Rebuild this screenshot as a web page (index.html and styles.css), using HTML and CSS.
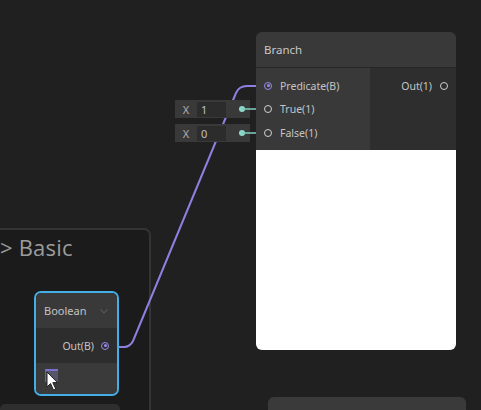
FILE: index.html
```html
<!DOCTYPE html>
<html>
<head>
<meta charset="utf-8">
<link rel="stylesheet" href="styles.css">
</head>
<body>
<div class="canvas">
  <div class="group">
    <div class="group-title">&gt; Basic</div>
  </div>
  <div class="stub-left"></div>
  <div class="stub-right"></div>

  <svg class="edges" width="481" height="410" viewBox="0 0 481 410">
    <path d="M109 347 L124 347 Q130 347 133 341 L236 93 Q239 86 247 86 L264 86" fill="none" stroke="#8f7fe0" stroke-width="2"/>
  </svg>

  <div class="const c1"><span class="cx">X</span><span class="cval">1</span><span class="cdot"></span></div>
  <div class="const c2"><span class="cx">X</span><span class="cval">0</span><span class="cdot"></span></div>
  <svg class="wires" width="481" height="410" viewBox="0 0 481 410">
    <line x1="241" y1="109" x2="264" y2="109" stroke="#7fcfc2" stroke-width="1.5"/>
    <line x1="241" y1="133" x2="264" y2="133" stroke="#7fcfc2" stroke-width="1.5"/>
  </svg>

  <div class="node branch">
    <div class="node-title">Branch</div>
    <div class="ports">
      <div class="inputs">
        <div class="port"><span class="pin pin-bool"></span>Predicate(B)</div>
        <div class="port"><span class="pin"></span>True(1)</div>
        <div class="port"><span class="pin"></span>False(1)</div>
      </div>
      <div class="outputs">
        <div class="port out">Out(1)<span class="pin"></span></div>
      </div>
    </div>
    <div class="preview"></div>
  </div>

  <div class="node boolean">
    <div class="bool-title">Boolean
      <svg class="chev" width="8" height="5" viewBox="0 0 8 5"><path d="M0.5 0.5 L4 4 L7.5 0.5" fill="none" stroke="#555" stroke-width="1.2"/></svg>
    </div>
    <div class="bool-out">Out(B)<span class="pin pin-bool"></span></div>
    <div class="bool-body">
      <span class="check"></span>
      <svg class="cursor" width="13" height="20" viewBox="0 0 13 20"><path d="M1 1 L1 16 L4.5 12.5 L7.5 19 L9.8 18 L6.8 11.6 L11.5 11.6 Z" fill="#fff" stroke="#222" stroke-width="1"/></svg>
    </div>
  </div>
</div>
</body>
</html>
```
FILE: styles.css
```css
html, body {
  margin: 0;
  padding: 0;
  background: #202020;
}
.canvas {
  position: relative;
  width: 481px;
  height: 410px;
  overflow: hidden;
  background: #202020;
  font-family: "Noto Sans", "Open Sans", sans-serif;
  color: #c4c4c4;
}
.group {
  position: absolute;
  left: -20px;
  top: 228px;
  width: 171px;
  height: 200px;
  background: #1b1b1b;
  border: 2px solid #343434;
  border-radius: 7px;
  box-sizing: border-box;
}
.group-title {
  position: absolute;
  left: 18px;
  top: 2px;
  font-size: 22px;
  color: #9c9c9c;
  font-family: "Open Sans", "Noto Sans", sans-serif;
  letter-spacing: 0.2px;
}
.stub-left {
  position: absolute;
  left: 0;
  top: 404px;
  width: 120px;
  height: 10px;
  background: #2e2e2e;
  border-radius: 5px 5px 0 0;
}
.stub-right {
  position: absolute;
  left: 268px;
  top: 397px;
  width: 198px;
  height: 20px;
  background: #3a3a3a;
  border-radius: 6px 6px 0 0;
}
.edges, .wires {
  position: absolute;
  left: 0;
  top: 0;
  pointer-events: none;
}
.const {
  position: absolute;
  left: 175px;
  width: 75px;
  height: 18px;
  background: #393939;
  display: flex;
  align-items: center;
  font-size: 11px;
  color: #bdbdbd;
}
.c1 { top: 100px; }
.c2 { top: 124px; }
.cx {
  width: 22px;
  text-align: center;
  color: #b0b0b0;
}
.cval {
  height: 15px;
  line-height: 15px;
  background: #2c2c2c;
  padding-left: 4px;
  box-sizing: border-box;
  width: 29px;
  color: #c0c0c0;
}
.cdot {
  margin-left: 13px;
  width: 6px;
  height: 6px;
  border-radius: 50%;
  background: #8fd8cb;
}
.node {
  position: absolute;
}
.branch {
  left: 256px;
  top: 32px;
  width: 200px;
  height: 318px;
  border-radius: 6px;
  overflow: hidden;
  display: flex;
  flex-direction: column;
  background: #2e2e2e;
}
.node-title {
  height: 35px;
  background: #393939;
  border-bottom: 1px solid #262626;
  font-size: 11.5px;
  line-height: 35px;
  padding-left: 8px;
  color: #c8c8c8;
}
.ports {
  display: flex;
  height: 82px;
}
.inputs {
  width: 114px;
  background: #393939;
  padding-top: 6px;
  box-sizing: border-box;
}
.outputs {
  flex: 1;
  background: #2e2e2e;
  padding-top: 6px;
  box-sizing: border-box;
}
.port {
  height: 23.5px;
  display: flex;
  align-items: center;
  font-size: 10.5px;
  color: #c4c4c4;
  padding-left: 8px;
}
.port .pin {
  margin-right: 8px;
}
.port.out {
  justify-content: flex-end;
  padding-left: 0;
  padding-right: 8px;
}
.port.out .pin {
  margin-right: 0;
  margin-left: 8px;
}
.pin {
  width: 6px;
  height: 6px;
  border: 1px solid #d0d0d0;
  border-radius: 50%;
  flex: none;
  position: relative;
}
.pin-bool {
  border-color: #9a8ae8;
}
.pin-bool::after {
  content: "";
  position: absolute;
  left: 1.5px;
  top: 1.5px;
  width: 3px;
  height: 3px;
  border-radius: 50%;
  background: #9a8ae8;
}
.preview {
  flex: 1;
  background: #ffffff;
}
.boolean {
  left: 34px;
  top: 291px;
  width: 85px;
  height: 105px;
  border: 2px solid #45aee6;
  border-radius: 7px;
  box-sizing: border-box;
  overflow: hidden;
  display: flex;
  flex-direction: column;
}
.bool-title {
  height: 35px;
  background: #393939;
  display: flex;
  align-items: center;
  justify-content: space-between;
  padding: 0 9px 0 8px;
  font-size: 11px;
  color: #c4c4c4;
}
.chev { margin-top: 1px; }
.bool-out {
  height: 35px;
  background: #2d2d2d;
  display: flex;
  align-items: center;
  justify-content: flex-end;
  padding-right: 8px;
  font-size: 10.5px;
  color: #c4c4c4;
}
.bool-out .pin {
  margin-left: 7px;
}
.bool-body {
  flex: 1;
  background: #3a3a3a;
  position: relative;
}
.check {
  position: absolute;
  left: 9px;
  top: 6px;
  width: 13px;
  height: 13px;
  background: #55556a;
  border-top: 2px solid #7b6fd0;
  border-left: 1px solid #6a60b0;
  box-sizing: border-box;
}
.cursor {
  position: absolute;
  left: 10px;
  top: 8px;
}
```
